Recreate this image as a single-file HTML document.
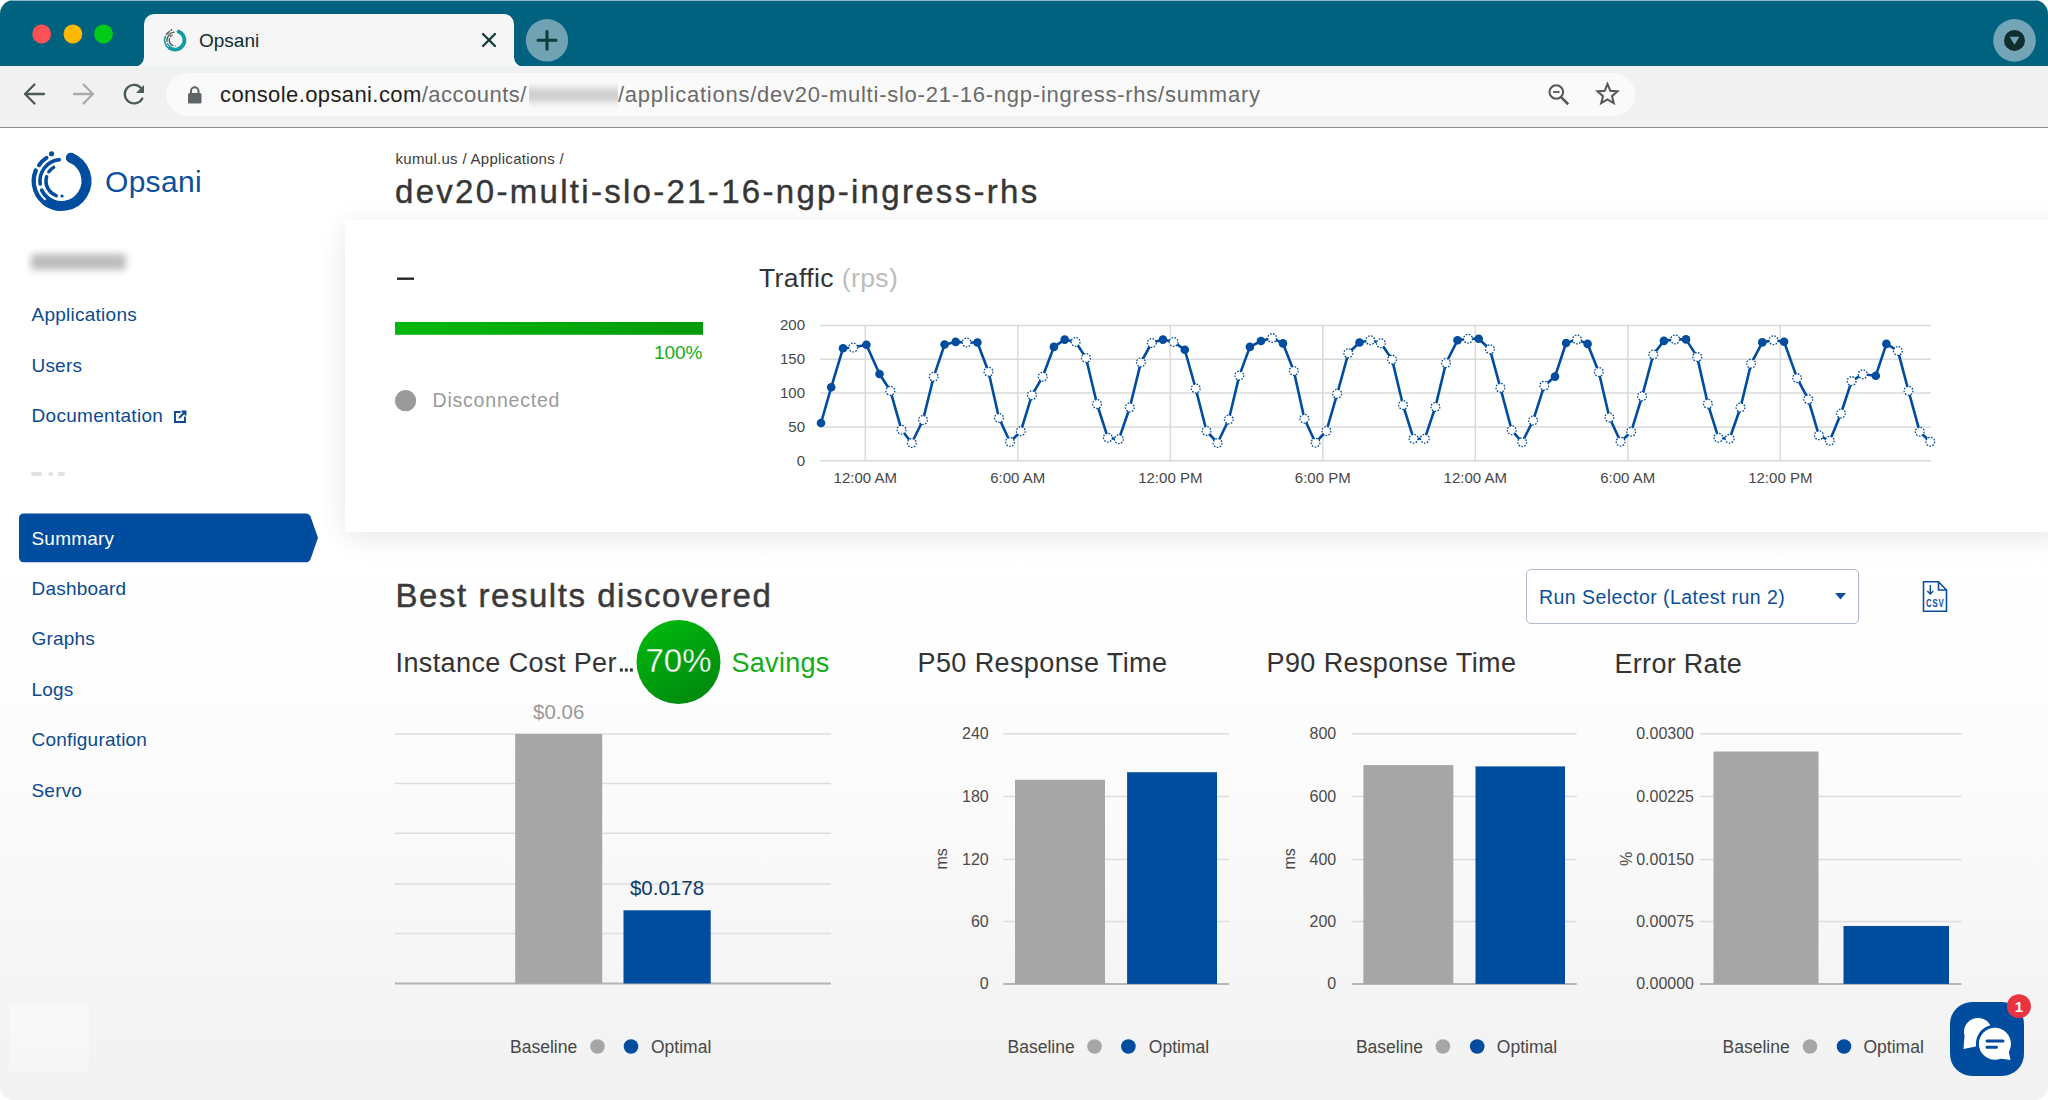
<!DOCTYPE html>
<html><head><meta charset="utf-8">
<style>
html,body{margin:0;padding:0;width:2048px;height:1100px;overflow:hidden;background:#fff;}
*{box-sizing:border-box;}
#win{position:absolute;left:0;top:0;width:2048px;height:1100px;border-radius:14px;overflow:hidden;background:#fff;}
#strip{position:absolute;left:0;top:0;width:2048px;height:67px;background:#00627f;border-top:1px solid #8fbccb;}
#tab{position:absolute;left:144px;top:14px;width:370px;height:53px;background:#f6f6f6;border-radius:10px 10px 0 0;}
#tabl{position:absolute;left:134px;top:56px;width:10px;height:11px;background:#f6f6f6;}
#tabl::after{content:"";position:absolute;left:0;top:0;width:10px;height:11px;background:#00627f;border-bottom-right-radius:10px;}
#tabr{position:absolute;left:514px;top:56px;width:10px;height:11px;background:#f6f6f6;}
#tabr::after{content:"";position:absolute;left:0;top:0;width:10px;height:11px;background:#00627f;border-bottom-left-radius:10px;}
#toolbar{position:absolute;left:0;top:66px;width:2048px;height:62px;background:#f1f1f2;border-top:1px solid #e6f8fb;border-bottom:1.5px solid #8c8c8c;}
#omni{position:absolute;left:166px;top:73px;width:1469px;height:43px;border-radius:22px;background:#fafafa;}
#page{position:absolute;left:0;top:128px;width:2048px;height:972px;background:linear-gradient(180deg,#ffffff 0px,#ffffff 420px,#fdfdfd 560px,#fafafa 700px,#f6f6f6 820px,#f3f3f3 920px,#f2f2f2 972px);}

#card{position:absolute;left:345px;top:220px;width:1720px;height:312px;background:#fff;box-shadow:0 10px 26px rgba(0,0,0,0.06),-4px 0 30px rgba(0,0,0,0.035);}
#ghost{position:absolute;left:9px;top:1005px;width:80px;height:66px;background:rgba(255,255,255,0.35);}
#blur1{position:absolute;left:31px;top:254px;width:95px;height:16px;background:#bdbdbd;filter:blur(3.8px);border-radius:3px;}
#blur2{position:absolute;left:529px;top:80px;width:89px;height:30px;overflow:hidden;}
#blur2 i{position:absolute;left:-4px;top:8px;width:97px;height:14px;background:#cdcdcd;filter:blur(3.5px);}
#sel{position:absolute;left:1526px;top:569px;width:333px;height:55px;border:1.6px solid #aebacb;border-radius:5px;background:#fff;}
#chat{position:absolute;left:1950px;top:1002px;width:74px;height:74px;border-radius:22px;background:#004c9e;}
svg#ov{position:absolute;left:0;top:0;}
text{font-family:"Liberation Sans",sans-serif;}
.ax{font-size:15px;fill:#474747;}
.bl{font-size:16px;fill:#4a4a4a;}
.lg{font-size:17.5px;fill:#474747;}
.vl{font-size:20.5px;}
.nav{font-size:19px;fill:#0b4a8f;letter-spacing:0.2px;}
</style></head><body>
<div id="win">
  <div id="strip"></div>
  <div id="tabl"></div><div id="tabr"></div>
  <div id="tab"></div>
  <div id="toolbar"></div>
  <div id="omni"></div>
  <div id="blur2"><i></i></div>
  <div id="page"></div>
  
  <div id="ghost"></div>
  <div id="blur1"></div>
  <div id="card"></div>
  <div id="sel"></div>
  <div id="chat"></div>
</div>
<svg id="ov" width="2048" height="1100" viewBox="0 0 2048 1100">
  <!-- traffic lights -->
  <circle cx="41.7" cy="34" r="9.4" fill="#fe5155"/>
  <circle cx="72.9" cy="34" r="9.4" fill="#ffb900"/>
  <circle cx="103.5" cy="34" r="9.4" fill="#00cc17"/>
  <!-- tab favicon + title + close -->
  <path d="M178.51,31.51 A9.38,9.38 0 1 1 168.97,47.38" fill="none" stroke="#139aa5" stroke-width="3.75" stroke-linecap="butt"/>
<circle cx="178.51" cy="31.51" r="1.88" fill="#139aa5"/>
<path d="M169.79,49.23 A10.43,10.43 0 0 1 165.33,36.29" fill="none" stroke="#139aa5" stroke-width="1.61" stroke-linecap="round"/>
<path d="M169.97,46.64 A8.18,8.18 0 0 1 167.59,43.65" fill="none" stroke="#139aa5" stroke-width="1.42" stroke-linecap="round"/>
<path d="M166.55,34.28 A10.31,10.31 0 0 1 169.38,31.55" fill="none" stroke="#5c5c5c" stroke-width="1.50" stroke-linecap="round"/>
<circle cx="171.28" cy="29.98" r="0.98" fill="#5c5c5c"/>
<path d="M167.02,41.32 A8.06,8.06 0 0 1 174.16,32.18" fill="none" stroke="#5c5c5c" stroke-width="1.35" stroke-linecap="round"/>
<path d="M173.01,45.66 A5.81,5.81 0 0 1 169.41,38.60" fill="none" stroke="#5c5c5c" stroke-width="1.35" stroke-linecap="round"/>
<path d="M170.24,36.74 A5.89,5.89 0 0 1 172.06,35.10" fill="none" stroke="#5c5c5c" stroke-width="1.27" stroke-linecap="round"/>
<circle cx="175.20" cy="45.82" r="0.60" fill="#5c5c5c"/>
  <text x="199" y="47" style="font-size:19px;fill:#0e2d2d;">Opsani</text>
  <path d="M483,34 L495,46 M495,34 L483,46" stroke="#0d3b33" stroke-width="2.3" stroke-linecap="round"/>
  <circle cx="547" cy="40.3" r="21.2" fill="#6fa3b4"/>
  <path d="M538,40.3 L556,40.3 M547,31.3 L547,49.3" stroke="#0f3d3d" stroke-width="3" stroke-linecap="round"/>
  <circle cx="2014.5" cy="40.4" r="21.3" fill="#74a5b6"/>
  <circle cx="2014.5" cy="40.4" r="10.5" fill="#0f2f2f"/>
  <path d="M2009.6,36.8 L2019.4,36.8 L2014.5,44.8 Z" fill="#74a5b6"/>
  <!-- toolbar icons -->
  <path d="M44,94 L25,94 M34.5,84.5 L25,94 L34.5,103.5" fill="none" stroke="#4d5a5a" stroke-width="2.3" stroke-linecap="round" stroke-linejoin="round"/>
  <path d="M74,94 L93,94 M83.5,84.5 L93,94 L83.5,103.5" fill="none" stroke="#a9acac" stroke-width="2.3" stroke-linecap="round" stroke-linejoin="round"/>
  <path d="M141.5,88.5 A9.3,9.3 0 1 0 142.3,98.5" fill="none" stroke="#4d5a5a" stroke-width="2.3" stroke-linecap="round"/>
  <path d="M144,85 L144,93 L136,93 Z" fill="#4d5a5a"/>
  <rect x="188" y="93" width="13.5" height="10.5" rx="1.5" fill="#5f6566"/>
  <path d="M191,94 L191,91 A3.75,3.75 0 0 1 198.5,91 L198.5,94" fill="none" stroke="#5f6566" stroke-width="2"/>
  <text x="220" y="102" style="font-size:22px;letter-spacing:0.4px;fill:#1d1d1d;">console.opsani.com<tspan style="fill:#6a6a6a;letter-spacing:0.5px">/accounts/</tspan></text>
  <text x="618" y="102" style="font-size:22px;letter-spacing:0.76px;fill:#6a6a6a;">/applications/dev20-multi-slo-21-16-ngp-ingress-rhs/summary</text>
  <circle cx="1556.3" cy="92" r="6.8" fill="none" stroke="#555" stroke-width="2"/>
  <path d="M1553,92 L1559.6,92" stroke="#555" stroke-width="1.8"/>
  <path d="M1561.3,97.3 L1567.3,103.3" stroke="#555" stroke-width="2.6" stroke-linecap="square"/>
  <path d="M1607.5,84 L1610.3,90.8 L1617.5,91.4 L1612,96.2 L1613.8,103.2 L1607.5,99.5 L1601.2,103.2 L1603,96.2 L1597.5,91.4 L1604.7,90.8 Z" fill="none" stroke="#555" stroke-width="2" stroke-linejoin="miter"/>
  <!-- sidebar -->
  <path d="M70.87,157.82 A25.00,25.00 0 1 1 45.43,200.15" fill="none" stroke="#004c9e" stroke-width="10.00" stroke-linecap="butt"/>
<circle cx="70.87" cy="157.82" r="5.00" fill="#004c9e"/>
<path d="M47.60,205.08 A27.80,27.80 0 0 1 35.72,170.59" fill="none" stroke="#004c9e" stroke-width="4.30" stroke-linecap="round"/>
<path d="M48.08,198.18 A21.80,21.80 0 0 1 41.74,190.21" fill="none" stroke="#004c9e" stroke-width="3.80" stroke-linecap="round"/>
<path d="M38.97,165.23 A27.50,27.50 0 0 1 46.52,157.94" fill="none" stroke="#004c9e" stroke-width="4.00" stroke-linecap="round"/>
<circle cx="51.58" cy="153.75" r="2.60" fill="#004c9e"/>
<path d="M40.21,183.99 A21.50,21.50 0 0 1 59.25,159.62" fill="none" stroke="#004c9e" stroke-width="3.60" stroke-linecap="round"/>
<path d="M56.20,195.57 A15.50,15.50 0 0 1 46.60,176.73" fill="none" stroke="#004c9e" stroke-width="3.60" stroke-linecap="round"/>
<path d="M48.80,171.77 A15.70,15.70 0 0 1 53.65,167.40" fill="none" stroke="#004c9e" stroke-width="3.40" stroke-linecap="round"/>
<circle cx="62.02" cy="195.99" r="1.60" fill="#004c9e"/>
  <text x="105" y="191.5" style="font-size:30px;fill:#0b4f9e;letter-spacing:0.3px;">Opsani</text>
  <text x="31.5" y="321" class="nav" style="letter-spacing:0.25px">Applications</text>
  <text x="31.5" y="371.5" class="nav">Users</text>
  <text x="31.5" y="422" class="nav" style="letter-spacing:0.3px">Documentation</text>
  <path d="M180.5,412 L175,412 L175,422 L185,422 L185,416.5 M179,418 L185.5,411.5 M181.5,411.5 L185.5,411.5 L185.5,415.5" fill="none" stroke="#0b4a8f" stroke-width="1.9"/>
  <rect x="31" y="472" width="11" height="4" rx="2" fill="#e2e2e2"/>
  <rect x="48.3" y="472" width="4.8" height="4" rx="2" fill="#e2e2e2"/>
  <rect x="57.6" y="472" width="7.4" height="4" rx="2" fill="#e2e2e2"/>
  <path d="M24,513.4 L306,513.4 Q309,513.4 310.5,516.5 L318,537.8 L310.5,559.2 Q309,562.3 306,562.3 L24,562.3 Q19,562.3 19,557.3 L19,518.4 Q19,513.4 24,513.4 Z" fill="#004c9e"/>
  <text x="31.5" y="544.5" class="nav" style="fill:#fff">Summary</text>
  <text x="31.5" y="594.7" class="nav">Dashboard</text>
  <text x="31.5" y="645" class="nav">Graphs</text>
  <text x="31.5" y="695.5" class="nav">Logs</text>
  <text x="31.5" y="746" class="nav">Configuration</text>
  <text x="31.5" y="796.5" class="nav">Servo</text>
  <!-- header -->
  <text x="395.5" y="163.7" style="font-size:15px;fill:#3a3a3a;letter-spacing:0.3px;">kumul.us / Applications /</text>
  <text x="395" y="203.2" style="font-size:33px;fill:#363636;letter-spacing:2.3px;stroke:#363636;stroke-width:0.4px;">dev20-multi-slo-21-16-ngp-ingress-rhs</text>
  <!-- card left -->
  <rect x="397" y="277.5" width="17" height="2.4" fill="#262626"/>
  <defs>
    <linearGradient id="gbar" x1="0" x2="1" y1="0" y2="0"><stop offset="0" stop-color="#00b90c"/><stop offset="1" stop-color="#009a0b"/></linearGradient>
    <linearGradient id="gcirc" x1="0.2" y1="0" x2="0.8" y2="1"><stop offset="0" stop-color="#00b80d"/><stop offset="1" stop-color="#00870f"/></linearGradient>
    <linearGradient id="gcircU" gradientUnits="userSpaceOnUse" x1="661.7" y1="620" x2="695.3" y2="704"><stop offset="0" stop-color="#00b80d"/><stop offset="1" stop-color="#00870f"/></linearGradient>
  </defs>
  <rect x="395" y="322" width="308" height="12.8" fill="url(#gbar)"/>
  <text x="702.5" y="359.2" text-anchor="end" style="font-size:19px;fill:#12ad17;">100%</text>
  <circle cx="405.6" cy="400.7" r="10.6" fill="#9a9a9a"/>
  <text x="432.5" y="407.2" style="font-size:19.5px;fill:#9a9a9a;letter-spacing:0.8px;">Disconnected</text>
  <text x="759" y="286.8" style="font-size:26.5px;fill:#333;letter-spacing:0.4px;">Traffic <tspan style="fill:#bcbcbc">(rps)</tspan></text>
  <line x1="820" y1="325.4" x2="1931" y2="325.4" stroke="#dadada" stroke-width="1.5"/>
<line x1="820" y1="359.2" x2="1931" y2="359.2" stroke="#dadada" stroke-width="1.5"/>
<line x1="820" y1="393.1" x2="1931" y2="393.1" stroke="#dadada" stroke-width="1.5"/>
<line x1="820" y1="426.9" x2="1931" y2="426.9" stroke="#dadada" stroke-width="1.5"/>
<line x1="820" y1="460.7" x2="1931" y2="460.7" stroke="#dadada" stroke-width="1.5"/>
<line x1="865.3" y1="325.4" x2="865.3" y2="460.7" stroke="#dadada" stroke-width="1.5"/>
<line x1="1017.8" y1="325.4" x2="1017.8" y2="460.7" stroke="#dadada" stroke-width="1.5"/>
<line x1="1170.3" y1="325.4" x2="1170.3" y2="460.7" stroke="#dadada" stroke-width="1.5"/>
<line x1="1322.8" y1="325.4" x2="1322.8" y2="460.7" stroke="#dadada" stroke-width="1.5"/>
<line x1="1475.3" y1="325.4" x2="1475.3" y2="460.7" stroke="#dadada" stroke-width="1.5"/>
<line x1="1627.8" y1="325.4" x2="1627.8" y2="460.7" stroke="#dadada" stroke-width="1.5"/>
<line x1="1780.3" y1="325.4" x2="1780.3" y2="460.7" stroke="#dadada" stroke-width="1.5"/>
<text x="805" y="330.4" text-anchor="end" class="ax">200</text>
<text x="805" y="364.2" text-anchor="end" class="ax">150</text>
<text x="805" y="398.1" text-anchor="end" class="ax">100</text>
<text x="805" y="431.9" text-anchor="end" class="ax">50</text>
<text x="805" y="465.7" text-anchor="end" class="ax">0</text>
<text x="865.3" y="482.5" text-anchor="middle" class="ax">12:00 AM</text>
<text x="1017.8" y="482.5" text-anchor="middle" class="ax">6:00 AM</text>
<text x="1170.3" y="482.5" text-anchor="middle" class="ax">12:00 PM</text>
<text x="1322.8" y="482.5" text-anchor="middle" class="ax">6:00 PM</text>
<text x="1475.3" y="482.5" text-anchor="middle" class="ax">12:00 AM</text>
<text x="1627.8" y="482.5" text-anchor="middle" class="ax">6:00 AM</text>
<text x="1780.3" y="482.5" text-anchor="middle" class="ax">12:00 PM</text>
<path d="M821.0,423.0 L831.2,387.3 L843.0,348.3 L853.2,347.5 L866.4,344.8 L879.5,374.0 L890.4,390.8 L901.5,429.8 L911.8,443.0 L923.0,420.0 L933.7,376.8 L944.6,344.5 L955.7,341.9 L966.6,342.5 L977.4,342.5 L988.5,371.8 L999.0,418.0 L1010.0,442.0 L1020.8,431.3 L1031.9,395.2 L1042.7,376.8 L1053.9,346.9 L1064.7,339.6 L1075.6,341.9 L1086.0,358.0 L1097.0,404.0 L1107.8,437.7 L1118.9,439.2 L1129.8,407.5 L1140.9,362.4 L1151.7,343.0 L1162.9,339.6 L1173.7,341.9 L1184.8,349.8 L1195.7,388.5 L1206.5,431.0 L1217.6,443.0 L1228.8,419.5 L1239.3,375.6 L1249.9,346.9 L1261.0,341.0 L1272.2,338.1 L1283.0,343.4 L1293.8,370.9 L1304.4,418.7 L1315.5,442.7 L1326.4,431.0 L1337.2,393.8 L1348.3,353.3 L1359.5,342.5 L1370.3,340.3 L1380.9,343.3 L1392.1,359.6 L1403.0,405.0 L1413.6,438.7 L1424.8,438.7 L1435.4,406.9 L1446.0,363.0 L1457.5,340.3 L1468.0,338.8 L1478.7,338.8 L1489.9,349.3 L1500.4,387.8 L1511.7,430.2 L1522.2,442.3 L1533.1,420.5 L1544.3,385.7 L1555.0,376.6 L1566.1,343.0 L1577.0,339.4 L1587.6,343.9 L1598.8,372.0 L1609.4,417.5 L1620.6,441.7 L1631.2,431.7 L1642.1,396.3 L1653.3,354.5 L1663.9,340.9 L1675.1,339.4 L1686.0,339.4 L1697.2,356.9 L1707.8,403.8 L1718.4,437.7 L1729.6,438.7 L1740.5,407.5 L1751.1,363.6 L1762.3,342.4 L1773.5,340.3 L1784.1,341.8 L1797.1,378.1 L1808.3,399.3 L1818.9,435.3 L1829.8,440.8 L1841.0,413.5 L1851.6,381.1 L1862.8,374.2 L1875.8,375.7 L1886.4,343.9 L1897.9,350.9 L1908.5,390.8 L1919.7,431.7 L1930.3,441.7" fill="none" stroke="#004c9e" stroke-width="2.6" stroke-linejoin="round"/>
<circle cx="821.0" cy="423.0" r="4.3" fill="#004c9e"/>
<circle cx="831.2" cy="387.3" r="4.3" fill="#004c9e"/>
<circle cx="843.0" cy="348.3" r="4.3" fill="#004c9e"/>
<circle cx="853.2" cy="347.5" r="4.4" fill="#fff" stroke="#004c9e" stroke-width="1.3" stroke-dasharray="1.6 1.4"/>
<circle cx="866.4" cy="344.8" r="4.3" fill="#004c9e"/>
<circle cx="879.5" cy="374.0" r="4.3" fill="#004c9e"/>
<circle cx="890.4" cy="390.8" r="4.4" fill="#fff" stroke="#004c9e" stroke-width="1.3" stroke-dasharray="1.6 1.4"/>
<circle cx="901.5" cy="429.8" r="4.4" fill="#fff" stroke="#004c9e" stroke-width="1.3" stroke-dasharray="1.6 1.4"/>
<circle cx="911.8" cy="443.0" r="4.4" fill="#fff" stroke="#004c9e" stroke-width="1.3" stroke-dasharray="1.6 1.4"/>
<circle cx="923.0" cy="420.0" r="4.4" fill="#fff" stroke="#004c9e" stroke-width="1.3" stroke-dasharray="1.6 1.4"/>
<circle cx="933.7" cy="376.8" r="4.4" fill="#fff" stroke="#004c9e" stroke-width="1.3" stroke-dasharray="1.6 1.4"/>
<circle cx="944.6" cy="344.5" r="4.3" fill="#004c9e"/>
<circle cx="955.7" cy="341.9" r="4.3" fill="#004c9e"/>
<circle cx="966.6" cy="342.5" r="4.4" fill="#fff" stroke="#004c9e" stroke-width="1.3" stroke-dasharray="1.6 1.4"/>
<circle cx="977.4" cy="342.5" r="4.3" fill="#004c9e"/>
<circle cx="988.5" cy="371.8" r="4.4" fill="#fff" stroke="#004c9e" stroke-width="1.3" stroke-dasharray="1.6 1.4"/>
<circle cx="999.0" cy="418.0" r="4.4" fill="#fff" stroke="#004c9e" stroke-width="1.3" stroke-dasharray="1.6 1.4"/>
<circle cx="1010.0" cy="442.0" r="4.4" fill="#fff" stroke="#004c9e" stroke-width="1.3" stroke-dasharray="1.6 1.4"/>
<circle cx="1020.8" cy="431.3" r="4.4" fill="#fff" stroke="#004c9e" stroke-width="1.3" stroke-dasharray="1.6 1.4"/>
<circle cx="1031.9" cy="395.2" r="4.4" fill="#fff" stroke="#004c9e" stroke-width="1.3" stroke-dasharray="1.6 1.4"/>
<circle cx="1042.7" cy="376.8" r="4.4" fill="#fff" stroke="#004c9e" stroke-width="1.3" stroke-dasharray="1.6 1.4"/>
<circle cx="1053.9" cy="346.9" r="4.3" fill="#004c9e"/>
<circle cx="1064.7" cy="339.6" r="4.3" fill="#004c9e"/>
<circle cx="1075.6" cy="341.9" r="4.4" fill="#fff" stroke="#004c9e" stroke-width="1.3" stroke-dasharray="1.6 1.4"/>
<circle cx="1086.0" cy="358.0" r="4.4" fill="#fff" stroke="#004c9e" stroke-width="1.3" stroke-dasharray="1.6 1.4"/>
<circle cx="1097.0" cy="404.0" r="4.4" fill="#fff" stroke="#004c9e" stroke-width="1.3" stroke-dasharray="1.6 1.4"/>
<circle cx="1107.8" cy="437.7" r="4.4" fill="#fff" stroke="#004c9e" stroke-width="1.3" stroke-dasharray="1.6 1.4"/>
<circle cx="1118.9" cy="439.2" r="4.4" fill="#fff" stroke="#004c9e" stroke-width="1.3" stroke-dasharray="1.6 1.4"/>
<circle cx="1129.8" cy="407.5" r="4.4" fill="#fff" stroke="#004c9e" stroke-width="1.3" stroke-dasharray="1.6 1.4"/>
<circle cx="1140.9" cy="362.4" r="4.4" fill="#fff" stroke="#004c9e" stroke-width="1.3" stroke-dasharray="1.6 1.4"/>
<circle cx="1151.7" cy="343.0" r="4.4" fill="#fff" stroke="#004c9e" stroke-width="1.3" stroke-dasharray="1.6 1.4"/>
<circle cx="1162.9" cy="339.6" r="4.3" fill="#004c9e"/>
<circle cx="1173.7" cy="341.9" r="4.4" fill="#fff" stroke="#004c9e" stroke-width="1.3" stroke-dasharray="1.6 1.4"/>
<circle cx="1184.8" cy="349.8" r="4.3" fill="#004c9e"/>
<circle cx="1195.7" cy="388.5" r="4.4" fill="#fff" stroke="#004c9e" stroke-width="1.3" stroke-dasharray="1.6 1.4"/>
<circle cx="1206.5" cy="431.0" r="4.4" fill="#fff" stroke="#004c9e" stroke-width="1.3" stroke-dasharray="1.6 1.4"/>
<circle cx="1217.6" cy="443.0" r="4.4" fill="#fff" stroke="#004c9e" stroke-width="1.3" stroke-dasharray="1.6 1.4"/>
<circle cx="1228.8" cy="419.5" r="4.4" fill="#fff" stroke="#004c9e" stroke-width="1.3" stroke-dasharray="1.6 1.4"/>
<circle cx="1239.3" cy="375.6" r="4.4" fill="#fff" stroke="#004c9e" stroke-width="1.3" stroke-dasharray="1.6 1.4"/>
<circle cx="1249.9" cy="346.9" r="4.3" fill="#004c9e"/>
<circle cx="1261.0" cy="341.0" r="4.3" fill="#004c9e"/>
<circle cx="1272.2" cy="338.1" r="4.4" fill="#fff" stroke="#004c9e" stroke-width="1.3" stroke-dasharray="1.6 1.4"/>
<circle cx="1283.0" cy="343.4" r="4.3" fill="#004c9e"/>
<circle cx="1293.8" cy="370.9" r="4.4" fill="#fff" stroke="#004c9e" stroke-width="1.3" stroke-dasharray="1.6 1.4"/>
<circle cx="1304.4" cy="418.7" r="4.4" fill="#fff" stroke="#004c9e" stroke-width="1.3" stroke-dasharray="1.6 1.4"/>
<circle cx="1315.5" cy="442.7" r="4.4" fill="#fff" stroke="#004c9e" stroke-width="1.3" stroke-dasharray="1.6 1.4"/>
<circle cx="1326.4" cy="431.0" r="4.4" fill="#fff" stroke="#004c9e" stroke-width="1.3" stroke-dasharray="1.6 1.4"/>
<circle cx="1337.2" cy="393.8" r="4.4" fill="#fff" stroke="#004c9e" stroke-width="1.3" stroke-dasharray="1.6 1.4"/>
<circle cx="1348.3" cy="353.3" r="4.4" fill="#fff" stroke="#004c9e" stroke-width="1.3" stroke-dasharray="1.6 1.4"/>
<circle cx="1359.5" cy="342.5" r="4.3" fill="#004c9e"/>
<circle cx="1370.3" cy="340.3" r="4.4" fill="#fff" stroke="#004c9e" stroke-width="1.3" stroke-dasharray="1.6 1.4"/>
<circle cx="1380.9" cy="343.3" r="4.4" fill="#fff" stroke="#004c9e" stroke-width="1.3" stroke-dasharray="1.6 1.4"/>
<circle cx="1392.1" cy="359.6" r="4.4" fill="#fff" stroke="#004c9e" stroke-width="1.3" stroke-dasharray="1.6 1.4"/>
<circle cx="1403.0" cy="405.0" r="4.4" fill="#fff" stroke="#004c9e" stroke-width="1.3" stroke-dasharray="1.6 1.4"/>
<circle cx="1413.6" cy="438.7" r="4.4" fill="#fff" stroke="#004c9e" stroke-width="1.3" stroke-dasharray="1.6 1.4"/>
<circle cx="1424.8" cy="438.7" r="4.4" fill="#fff" stroke="#004c9e" stroke-width="1.3" stroke-dasharray="1.6 1.4"/>
<circle cx="1435.4" cy="406.9" r="4.4" fill="#fff" stroke="#004c9e" stroke-width="1.3" stroke-dasharray="1.6 1.4"/>
<circle cx="1446.0" cy="363.0" r="4.4" fill="#fff" stroke="#004c9e" stroke-width="1.3" stroke-dasharray="1.6 1.4"/>
<circle cx="1457.5" cy="340.3" r="4.3" fill="#004c9e"/>
<circle cx="1468.0" cy="338.8" r="4.4" fill="#fff" stroke="#004c9e" stroke-width="1.3" stroke-dasharray="1.6 1.4"/>
<circle cx="1478.7" cy="338.8" r="4.3" fill="#004c9e"/>
<circle cx="1489.9" cy="349.3" r="4.4" fill="#fff" stroke="#004c9e" stroke-width="1.3" stroke-dasharray="1.6 1.4"/>
<circle cx="1500.4" cy="387.8" r="4.4" fill="#fff" stroke="#004c9e" stroke-width="1.3" stroke-dasharray="1.6 1.4"/>
<circle cx="1511.7" cy="430.2" r="4.4" fill="#fff" stroke="#004c9e" stroke-width="1.3" stroke-dasharray="1.6 1.4"/>
<circle cx="1522.2" cy="442.3" r="4.4" fill="#fff" stroke="#004c9e" stroke-width="1.3" stroke-dasharray="1.6 1.4"/>
<circle cx="1533.1" cy="420.5" r="4.4" fill="#fff" stroke="#004c9e" stroke-width="1.3" stroke-dasharray="1.6 1.4"/>
<circle cx="1544.3" cy="385.7" r="4.4" fill="#fff" stroke="#004c9e" stroke-width="1.3" stroke-dasharray="1.6 1.4"/>
<circle cx="1555.0" cy="376.6" r="4.3" fill="#004c9e"/>
<circle cx="1566.1" cy="343.0" r="4.3" fill="#004c9e"/>
<circle cx="1577.0" cy="339.4" r="4.4" fill="#fff" stroke="#004c9e" stroke-width="1.3" stroke-dasharray="1.6 1.4"/>
<circle cx="1587.6" cy="343.9" r="4.3" fill="#004c9e"/>
<circle cx="1598.8" cy="372.0" r="4.4" fill="#fff" stroke="#004c9e" stroke-width="1.3" stroke-dasharray="1.6 1.4"/>
<circle cx="1609.4" cy="417.5" r="4.4" fill="#fff" stroke="#004c9e" stroke-width="1.3" stroke-dasharray="1.6 1.4"/>
<circle cx="1620.6" cy="441.7" r="4.4" fill="#fff" stroke="#004c9e" stroke-width="1.3" stroke-dasharray="1.6 1.4"/>
<circle cx="1631.2" cy="431.7" r="4.4" fill="#fff" stroke="#004c9e" stroke-width="1.3" stroke-dasharray="1.6 1.4"/>
<circle cx="1642.1" cy="396.3" r="4.4" fill="#fff" stroke="#004c9e" stroke-width="1.3" stroke-dasharray="1.6 1.4"/>
<circle cx="1653.3" cy="354.5" r="4.4" fill="#fff" stroke="#004c9e" stroke-width="1.3" stroke-dasharray="1.6 1.4"/>
<circle cx="1663.9" cy="340.9" r="4.3" fill="#004c9e"/>
<circle cx="1675.1" cy="339.4" r="4.4" fill="#fff" stroke="#004c9e" stroke-width="1.3" stroke-dasharray="1.6 1.4"/>
<circle cx="1686.0" cy="339.4" r="4.3" fill="#004c9e"/>
<circle cx="1697.2" cy="356.9" r="4.4" fill="#fff" stroke="#004c9e" stroke-width="1.3" stroke-dasharray="1.6 1.4"/>
<circle cx="1707.8" cy="403.8" r="4.4" fill="#fff" stroke="#004c9e" stroke-width="1.3" stroke-dasharray="1.6 1.4"/>
<circle cx="1718.4" cy="437.7" r="4.4" fill="#fff" stroke="#004c9e" stroke-width="1.3" stroke-dasharray="1.6 1.4"/>
<circle cx="1729.6" cy="438.7" r="4.4" fill="#fff" stroke="#004c9e" stroke-width="1.3" stroke-dasharray="1.6 1.4"/>
<circle cx="1740.5" cy="407.5" r="4.4" fill="#fff" stroke="#004c9e" stroke-width="1.3" stroke-dasharray="1.6 1.4"/>
<circle cx="1751.1" cy="363.6" r="4.4" fill="#fff" stroke="#004c9e" stroke-width="1.3" stroke-dasharray="1.6 1.4"/>
<circle cx="1762.3" cy="342.4" r="4.3" fill="#004c9e"/>
<circle cx="1773.5" cy="340.3" r="4.4" fill="#fff" stroke="#004c9e" stroke-width="1.3" stroke-dasharray="1.6 1.4"/>
<circle cx="1784.1" cy="341.8" r="4.3" fill="#004c9e"/>
<circle cx="1797.1" cy="378.1" r="4.4" fill="#fff" stroke="#004c9e" stroke-width="1.3" stroke-dasharray="1.6 1.4"/>
<circle cx="1808.3" cy="399.3" r="4.4" fill="#fff" stroke="#004c9e" stroke-width="1.3" stroke-dasharray="1.6 1.4"/>
<circle cx="1818.9" cy="435.3" r="4.4" fill="#fff" stroke="#004c9e" stroke-width="1.3" stroke-dasharray="1.6 1.4"/>
<circle cx="1829.8" cy="440.8" r="4.4" fill="#fff" stroke="#004c9e" stroke-width="1.3" stroke-dasharray="1.6 1.4"/>
<circle cx="1841.0" cy="413.5" r="4.4" fill="#fff" stroke="#004c9e" stroke-width="1.3" stroke-dasharray="1.6 1.4"/>
<circle cx="1851.6" cy="381.1" r="4.4" fill="#fff" stroke="#004c9e" stroke-width="1.3" stroke-dasharray="1.6 1.4"/>
<circle cx="1862.8" cy="374.2" r="4.4" fill="#fff" stroke="#004c9e" stroke-width="1.3" stroke-dasharray="1.6 1.4"/>
<circle cx="1875.8" cy="375.7" r="4.3" fill="#004c9e"/>
<circle cx="1886.4" cy="343.9" r="4.3" fill="#004c9e"/>
<circle cx="1897.9" cy="350.9" r="4.4" fill="#fff" stroke="#004c9e" stroke-width="1.3" stroke-dasharray="1.6 1.4"/>
<circle cx="1908.5" cy="390.8" r="4.4" fill="#fff" stroke="#004c9e" stroke-width="1.3" stroke-dasharray="1.6 1.4"/>
<circle cx="1919.7" cy="431.7" r="4.4" fill="#fff" stroke="#004c9e" stroke-width="1.3" stroke-dasharray="1.6 1.4"/>
<circle cx="1930.3" cy="441.7" r="4.4" fill="#fff" stroke="#004c9e" stroke-width="1.3" stroke-dasharray="1.6 1.4"/>
  <!-- best results -->
  <text x="395.5" y="607" style="font-size:33px;fill:#3a3a3a;letter-spacing:1.55px;stroke:#3a3a3a;stroke-width:0.45px;">Best results discovered</text>
  <text x="1539" y="604" style="font-size:19.5px;fill:#0b4f9c;letter-spacing:0.45px;">Run Selector (Latest run 2)</text>
  <path d="M1835,593 L1846,593 L1840.5,599.4 Z" fill="#0b4f9c"/>
  <path d="M1923.5,581.8 L1938.5,581.8 L1946.5,590 L1946.5,611.2 L1923.5,611.2 Z M1938.5,581.8 L1938.5,590 L1946.5,590" fill="none" stroke="#0b4f9c" stroke-width="1.6" stroke-linejoin="miter"/>
  <path d="M1930.3,585 L1930.3,594 M1927.3,591 L1930.3,594 L1933.3,591" fill="none" stroke="#0b4f9c" stroke-width="1.4"/>
  <text transform="translate(1935.3,606.6) scale(0.68,1)" x="0" y="0" text-anchor="middle" style="font-size:11.5px;font-weight:bold;fill:#0b4f9c;letter-spacing:1.2px;">CSV</text>
  <text x="395.5" y="671.6" style="font-size:27px;fill:#333;letter-spacing:0.4px;">Instance Cost Per</text>
  <rect x="619.9" y="668.4" width="2.9" height="3.2" fill="#333"/><rect x="624.9" y="668.4" width="2.9" height="3.2" fill="#333"/><rect x="629.9" y="668.4" width="2.9" height="3.2" fill="#333"/>
  <circle cx="678.5" cy="662" r="42" fill="url(#gcirc)"/>
  <text x="678.5" y="672.2" text-anchor="middle" style="font-size:33px;fill:#fff;stroke:url(#gcircU);stroke-width:0.35px;">70%</text>
  <text x="731.5" y="672.2" style="font-size:27px;fill:#12ad17;letter-spacing:0.3px;">Savings</text>
  <text x="917.5" y="672.3" style="font-size:27px;fill:#333;letter-spacing:0.4px;">P50 Response Time</text>
  <text x="1266.5" y="672.3" style="font-size:27px;fill:#333;letter-spacing:0.4px;">P90 Response Time</text>
  <text x="1614.5" y="672.5" style="font-size:27px;fill:#333;letter-spacing:0.3px;">Error Rate</text>
  <line x1="395" y1="734" x2="831" y2="734" stroke="#dddddd" stroke-width="1.5"/>
<line x1="395" y1="783.5" x2="831" y2="783.5" stroke="#dddddd" stroke-width="1.5"/>
<line x1="395" y1="833.3" x2="831" y2="833.3" stroke="#dddddd" stroke-width="1.5"/>
<line x1="395" y1="884" x2="831" y2="884" stroke="#dddddd" stroke-width="1.5"/>
<line x1="395" y1="933.5" x2="831" y2="933.5" stroke="#dddddd" stroke-width="1.5"/>
<line x1="395" y1="983.5" x2="831" y2="983.5" stroke="#b5b5b5" stroke-width="2"/>
<rect x="515.2" y="734" width="87.0" height="249.5" fill="#a6a6a6"/>
<rect x="623.5" y="910.3" width="87.20000000000005" height="73.20000000000005" fill="#004c9e"/>
<text x="558.7" y="719" text-anchor="middle" class="vl" fill="#9a9a9a">$0.06</text>
<text x="667" y="895.4" text-anchor="middle" class="vl" fill="#0d3a6c">$0.0178</text>
<text x="510" y="1052.5" class="lg">Baseline</text><circle cx="597.5" cy="1046.5" r="7.3" fill="#a6a6a6"/><circle cx="631" cy="1046.5" r="7.3" fill="#004c9e"/><text x="651" y="1052.5" class="lg">Optimal</text>
<line x1="1003.3" y1="733.8" x2="1229.2" y2="733.8" stroke="#dddddd" stroke-width="1.5"/>
<line x1="1003.3" y1="796.5" x2="1229.2" y2="796.5" stroke="#dddddd" stroke-width="1.5"/>
<line x1="1003.3" y1="859.6" x2="1229.2" y2="859.6" stroke="#dddddd" stroke-width="1.5"/>
<line x1="1003.3" y1="921.5" x2="1229.2" y2="921.5" stroke="#dddddd" stroke-width="1.5"/>
<line x1="1003.3" y1="983.9" x2="1229.2" y2="983.9" stroke="#b5b5b5" stroke-width="2"/>
<text x="988.7" y="739.3" text-anchor="end" class="bl">240</text>
<text x="988.7" y="802.0" text-anchor="end" class="bl">180</text>
<text x="988.7" y="865.1" text-anchor="end" class="bl">120</text>
<text x="988.7" y="927.0" text-anchor="end" class="bl">60</text>
<text x="988.7" y="989.4" text-anchor="end" class="bl">0</text>
<rect x="1015" y="779.8" width="90" height="204.10000000000002" fill="#a6a6a6"/>
<rect x="1127.1" y="772.2" width="89.90000000000009" height="211.69999999999993" fill="#004c9e"/>
<text x="947" y="858.8499999999999" transform="rotate(-90 947 858.8499999999999)" text-anchor="middle" class="bl">ms</text>
<text x="1007.5" y="1052.5" class="lg">Baseline</text><circle cx="1094.5" cy="1046.5" r="7.3" fill="#a6a6a6"/><circle cx="1128.4" cy="1046.5" r="7.3" fill="#004c9e"/><text x="1148.8" y="1052.5" class="lg">Optimal</text>
<line x1="1351.7" y1="733.8" x2="1576.7" y2="733.8" stroke="#dddddd" stroke-width="1.5"/>
<line x1="1351.7" y1="796.5" x2="1576.7" y2="796.5" stroke="#dddddd" stroke-width="1.5"/>
<line x1="1351.7" y1="859.6" x2="1576.7" y2="859.6" stroke="#dddddd" stroke-width="1.5"/>
<line x1="1351.7" y1="921.5" x2="1576.7" y2="921.5" stroke="#dddddd" stroke-width="1.5"/>
<line x1="1351.7" y1="983.9" x2="1576.7" y2="983.9" stroke="#b5b5b5" stroke-width="2"/>
<text x="1336.2" y="739.3" text-anchor="end" class="bl">800</text>
<text x="1336.2" y="802.0" text-anchor="end" class="bl">600</text>
<text x="1336.2" y="865.1" text-anchor="end" class="bl">400</text>
<text x="1336.2" y="927.0" text-anchor="end" class="bl">200</text>
<text x="1336.2" y="989.4" text-anchor="end" class="bl">0</text>
<rect x="1363.4" y="765.1" width="89.89999999999986" height="218.79999999999995" fill="#a6a6a6"/>
<rect x="1475.5" y="766.4" width="89.5" height="217.5" fill="#004c9e"/>
<text x="1295" y="858.8499999999999" transform="rotate(-90 1295 858.8499999999999)" text-anchor="middle" class="bl">ms</text>
<text x="1355.9" y="1052.5" class="lg">Baseline</text><circle cx="1442.9" cy="1046.5" r="7.3" fill="#a6a6a6"/><circle cx="1477.2" cy="1046.5" r="7.3" fill="#004c9e"/><text x="1496.8" y="1052.5" class="lg">Optimal</text>
<line x1="1700" y1="733.8" x2="1961.5" y2="733.8" stroke="#dddddd" stroke-width="1.5"/>
<line x1="1700" y1="796.5" x2="1961.5" y2="796.5" stroke="#dddddd" stroke-width="1.5"/>
<line x1="1700" y1="859.6" x2="1961.5" y2="859.6" stroke="#dddddd" stroke-width="1.5"/>
<line x1="1700" y1="921.5" x2="1961.5" y2="921.5" stroke="#dddddd" stroke-width="1.5"/>
<line x1="1700" y1="983.9" x2="1961.5" y2="983.9" stroke="#b5b5b5" stroke-width="2"/>
<text x="1694" y="739.3" text-anchor="end" class="bl">0.00300</text>
<text x="1694" y="802.0" text-anchor="end" class="bl">0.00225</text>
<text x="1694" y="865.1" text-anchor="end" class="bl">0.00150</text>
<text x="1694" y="927.0" text-anchor="end" class="bl">0.00075</text>
<text x="1694" y="989.4" text-anchor="end" class="bl">0.00000</text>
<rect x="1713.5" y="751.5" width="105.0" height="232.39999999999998" fill="#a6a6a6"/>
<rect x="1843.5" y="926" width="105.5" height="57.89999999999998" fill="#004c9e"/>
<text x="1632" y="858.8499999999999" transform="rotate(-90 1632 858.8499999999999)" text-anchor="middle" class="bl">%</text>
<text x="1722.5" y="1052.5" class="lg">Baseline</text><circle cx="1810" cy="1046.5" r="7.3" fill="#a6a6a6"/><circle cx="1844" cy="1046.5" r="7.3" fill="#004c9e"/><text x="1863.5" y="1052.5" class="lg">Optimal</text>
  <!-- chat -->
  <circle cx="1978" cy="1032" r="14" fill="#fff"/>
  <path d="M1964.5,1036 L1963.5,1049 L1978,1046 Z" fill="#fff"/>
  <circle cx="1994.9" cy="1043.8" r="19" fill="#004c9e"/>
  <circle cx="1994.9" cy="1043.8" r="16" fill="#fff"/>
  <path d="M2008,1048 L2010.5,1060 L1996,1058 Z" fill="#fff"/>
  <path d="M1987,1041 L2003,1041 M1987,1047.3 L1996.5,1047.3" stroke="#004c9e" stroke-width="3" stroke-linecap="round"/>
  <circle cx="2018.9" cy="1006.2" r="12" fill="#ea3340"/>
  <text x="2019" y="1011.5" text-anchor="middle" style="font-size:15px;font-weight:bold;fill:#fff;">1</text>
</svg>
</body></html>
